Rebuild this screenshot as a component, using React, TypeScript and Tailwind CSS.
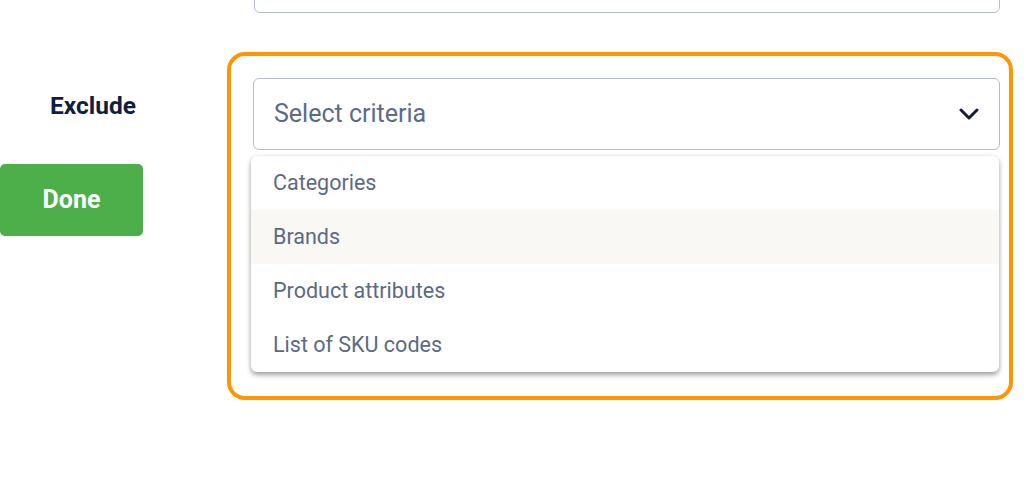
import React from "react";

const options = ["Categories", "Brands", "Product attributes", "List of SKU codes"];

export default function App() {
  return (
    <div className="relative h-[494px] w-[1024px] overflow-hidden bg-white font-['Roboto',sans-serif]">
      {/* input from the previous row, cut off at the top */}
      <div className="-mt-[28px] ml-[254px] h-[41px] w-[746px] rounded-md border border-[#b6bccb]" />

      <div className="mt-[39px] flex">
        <div className="w-[227px] shrink-0">
          <p className="mt-[38px] pl-[50px] text-[24.5px] font-bold leading-[32px] text-[#0f1f3d]">
            Exclude
          </p>
          <button className="mt-[42px] flex h-[72px] w-[143px] items-center justify-center rounded-[5px] bg-[#4caf4a] text-[25px] font-bold text-white">
            Done
          </button>
        </div>

        <div className="h-[348px] w-[786px] rounded-[18px] border-4 border-[#ff9500] pl-[22px] pr-[9px] pt-[22px]">
          <div className="relative">
            <div className="flex h-[72px] w-full items-center justify-between rounded-md border border-[#b6bccb] pl-[20px] pr-[20px]">
              <span className="text-[25px] text-[#5c6b86]">Select criteria</span>
              <svg width="20" height="12" viewBox="0 0 20 12" fill="none">
                <polyline
                  points="2,2 10,10 18,2"
                  stroke="#0f1f3d"
                  strokeWidth="3"
                  strokeLinecap="round"
                  strokeLinejoin="round"
                />
              </svg>
            </div>

            <ul className="absolute left-[-2px] right-[1px] top-[78px] overflow-hidden rounded-md bg-white shadow-[0_3px_5px_rgba(0,0,0,0.35),0_0_4px_rgba(0,0,0,0.08)]">
              {options.map((o, i) => (
                <li
                  key={o}
                  className={`flex h-[54px] items-center pl-[22px] text-[21.5px] text-[#5b6a83] ${
                    i === 1 ? "bg-[#f9f8f4]" : ""
                  }`}
                >
                  {o}
                </li>
              ))}
            </ul>
          </div>
        </div>
      </div>
    </div>
  );
}
